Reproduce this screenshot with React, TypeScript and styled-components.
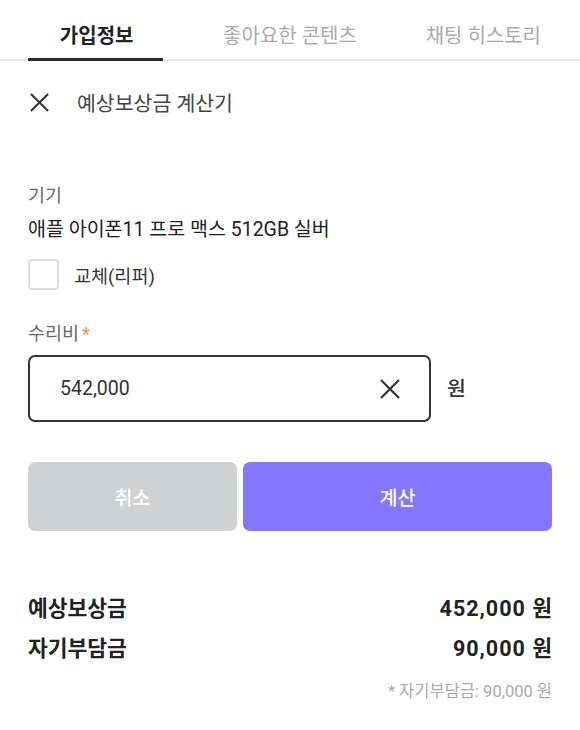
import React, { useState } from "react";
import styled, { createGlobalStyle } from "styled-components";

const Global = createGlobalStyle`
  html, body { margin: 0; padding: 0; background: #fff; }
  body { font-family: Roboto, "Noto Sans CJK KR", sans-serif; color: #222; }
  * { box-sizing: border-box; }
`;

const Page = styled.div`
  width: 580px;
  height: 730px;
  background: #fff;
  overflow: hidden;
`;

const Tabs = styled.div`
  display: grid;
  grid-template-columns: 1fr 1fr 1fr;
  height: 61px;
  border-bottom: 2px solid #e8e8e8;
`;

const Tab = styled.div<{ $active?: boolean }>`
  position: relative;
  display: flex;
  align-items: flex-start;
  justify-content: center;
  padding-top: 23px;
  line-height: 26px;
  font-size: 20px;
  font-weight: ${(p) => (p.$active ? 700 : 400)};
  color: ${(p) => (p.$active ? "#222" : "#a9a9a9")};
  &::after {
    content: "";
    display: ${(p) => (p.$active ? "block" : "none")};
    position: absolute;
    left: 50%;
    bottom: -2px;
    width: 135px;
    margin-left: -69px;
    height: 3px;
    background: #2b2b2b;
  }
`;

const Content = styled.div`
  padding: 0 28px;
`;

const Header = styled.div`
  display: flex;
  align-items: center;
  gap: 27px;
  height: 82px;
`;

const Title = styled.div`
  font-size: 20.5px;
  color: #444;
  font-weight: 400;
`;

const IconBtn = styled.span`
  display: inline-flex;
  width: 22px;
  height: 22px;
  align-items: center;
  justify-content: center;
`;

const Label = styled.div<{ $top: number }>`
  margin-top: ${(p) => p.$top}px;
  font-size: 18.5px;
  color: #6a6a6a;
  line-height: 24px;
`;

const Req = styled.span`
  color: #ee8a45;
  margin-left: 3px;
`;

const DeviceName = styled.div`
  margin-top: 9px;
  font-size: 19.5px;
  color: #222;
  line-height: 26px;
`;

const CheckRow = styled.label`
  display: flex;
  align-items: center;
  gap: 15px;
  margin-top: 16px;
  height: 31px;
  font-size: 18.5px;
  color: #333;
`;

const Box = styled.span`
  width: 31px;
  height: 31px;
  border: 2px solid #ddd;
  border-radius: 4px;
  background: #fff;
`;

const InputRow = styled.div`
  display: flex;
  align-items: center;
  gap: 16px;
  margin-top: 9px;
`;

const InputBox = styled.div`
  width: 403px;
  height: 67px;
  border: 2px solid #333;
  border-radius: 7px;
  display: flex;
  align-items: center;
  padding: 0 28px 0 30px;
  justify-content: space-between;
`;

const Value = styled.span`
  font-size: 19.5px;
  color: #333;
`;

const Unit = styled.span`
  font-size: 20.5px;
  color: #333;
  font-weight: 500;
  margin-bottom: 4px;
`;

const Buttons = styled.div`
  display: grid;
  grid-template-columns: 209px 1fr;
  gap: 6px;
  margin-top: 40px;
`;

const Btn = styled.button<{ $primary?: boolean }>`
  height: 69px;
  border: none;
  border-radius: 7px;
  background: ${(p) => (p.$primary ? "#8776fd" : "#d0d1d3")};
  color: #fff;
  font-family: inherit;
  font-size: 19.5px;
  font-weight: 500;
`;

const Results = styled.div`
  margin-top: 64px;
  display: flex;
  flex-direction: column;
  gap: 12px;
`;

const ResultRow = styled.div`
  display: flex;
  justify-content: space-between;
  align-items: center;
  font-size: 21.5px;
  font-weight: 700;
  color: #222;
  line-height: 28px;
`;

const Amount = styled.span`
  letter-spacing: 1px;
  margin-right: -1px;
`;

const Note = styled.div`
  text-align: right;
  font-size: 16.5px;
  line-height: 20px;
  color: #aaa;
  margin-top: 19px;
`;

const XIcon = ({ size = 22, stroke = "#333" }: { size?: number; stroke?: string }) => (
  <svg width={size} height={size} viewBox="0 0 22 22">
    <path d="M2 2 L20 20 M20 2 L2 20" stroke={stroke} strokeWidth={2.2} fill="none" />
  </svg>
);

export default function App() {
  const [checked] = useState(false);
  return (
    <Page>
      <Global />
      <Tabs>
        <Tab $active>가입정보</Tab>
        <Tab>좋아요한 콘텐츠</Tab>
        <Tab>채팅 히스토리</Tab>
      </Tabs>
      <Content>
        <Header>
          <IconBtn>
            <XIcon size={21} />
          </IconBtn>
          <Title>예상보상금 계산기</Title>
        </Header>
        <Label $top={41}>기기</Label>
        <DeviceName>애플 아이폰11 프로 맥스 512GB 실버</DeviceName>
        <CheckRow>
          <Box data-checked={checked} />
          교체(리퍼)
        </CheckRow>
        <Label $top={32}>
          수리비<Req>*</Req>
        </Label>
        <InputRow>
          <InputBox>
            <Value>542,000</Value>
            <IconBtn>
              <XIcon size={22} />
            </IconBtn>
          </InputBox>
          <Unit>원</Unit>
        </InputRow>
        <Buttons>
          <Btn>취소</Btn>
          <Btn $primary>계산</Btn>
        </Buttons>
        <Results>
          <ResultRow>
            <span>예상보상금</span>
            <Amount>452,000 원</Amount>
          </ResultRow>
          <ResultRow>
            <span>자기부담금</span>
            <Amount>90,000 원</Amount>
          </ResultRow>
        </Results>
        <Note>* 자기부담금: 90,000 원</Note>
      </Content>
    </Page>
  );
}
